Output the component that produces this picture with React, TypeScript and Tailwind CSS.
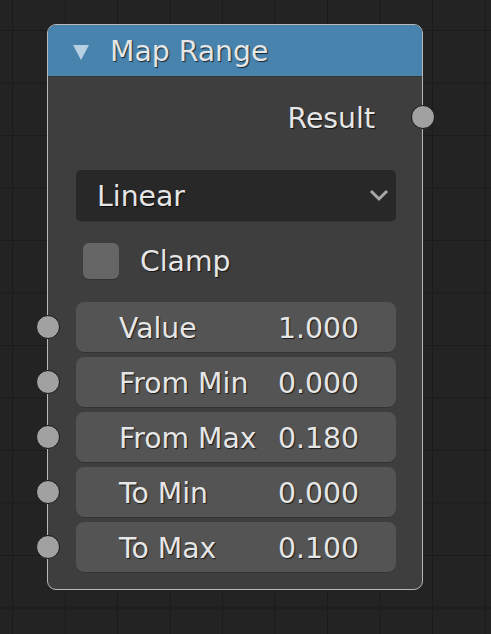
const FIELDS = [
  { label: "Value", value: "1.000" },
  { label: "From Min", value: "0.000" },
  { label: "From Max", value: "0.180" },
  { label: "To Min", value: "0.000" },
  { label: "To Max", value: "0.100" },
];

// Blender-style label text: light grey with a soft drop shadow
const txt = "text-[28.3px] leading-none translate-y-[2px] text-[#e6e6e6] [text-shadow:1px_1px_1px_rgba(0,0,0,0.7)]";

function Socket({ side }: { side: "left" | "right" }) {
  return (
    <div
      className={`absolute top-1/2 -translate-y-1/2 size-[24px] rounded-full bg-[#a1a1a1] border border-[#151515] ${
        side === "left" ? "-left-[12px]" : "-right-[13px]"
      }`}
    />
  );
}

export default function App() {
  return (
    <div
      className="w-[491px] h-[634px] overflow-hidden bg-[#232323] bg-[linear-gradient(to_right,#1b1b1b_1px,transparent_1px),linear-gradient(to_bottom,#1b1b1b_1px,transparent_1px)] bg-size-[52.5px_52.5px] bg-position-[12px_30px] pt-[24px] pl-[47px] font-['DejaVu_Sans',sans-serif]"
    >
      <div className="w-[376px] h-[566px] rounded-[9px] border border-[#b8b8b8] bg-[#404040]/95 flex flex-col">
        {/* header */}
        <div className="h-[52px] shrink-0 rounded-t-[8px] bg-[#4887b3]/95 border-b border-[#353535] flex items-center pl-[25px] gap-[21px]">
          <svg width="16" height="16" viewBox="0 0 16 16" className="translate-y-[1px]">
            <path d="M0 1h16L8 16z" fill="#b6cfe2" />
          </svg>
          <span className={txt}>Map Range</span>
        </div>

        {/* output */}
        <div className="relative mt-[20px] h-[40px] flex items-center justify-end pr-[47px]">
          <span className={txt}>Result</span>
          <Socket side="right" />
        </div>

        {/* mode dropdown */}
        <div className="ml-[28px] mr-[26px] mt-[33px] h-[51px] rounded-[5px] bg-[#282828] shadow-[0_1px_0_#363636] flex items-center justify-between pl-[21px] pr-[7px]">
          <span className={txt}>Linear</span>
          <svg width="20" height="13" viewBox="0 0 20 13">
            <path d="M2 2l8 8 8-8" fill="none" stroke="#a8a8a8" strokeWidth="3" />
          </svg>
        </div>

        {/* clamp */}
        <div className="ml-[35px] mt-[22px] h-[35px] flex items-center gap-[21px]">
          <div className="size-[36px] rounded-[6px] bg-[#666666] shadow-[0_1px_0_#333]" />
          <span className={txt}>Clamp</span>
        </div>

        {/* inputs */}
        <div className="mt-[24px] flex flex-col gap-[5px]">
          {FIELDS.map((f) => (
            <div key={f.label} className="relative h-[50px] pl-[28px] pr-[26px]">
              <Socket side="left" />
              <div className="h-full rounded-[8px] bg-[#545454] shadow-[0_1px_0_#333333] flex items-center justify-between pl-[43px] pr-[37px]">
                <span className={txt}>{f.label}</span>
                <span className={txt}>{f.value}</span>
              </div>
            </div>
          ))}
        </div>
      </div>
    </div>
  );
}
